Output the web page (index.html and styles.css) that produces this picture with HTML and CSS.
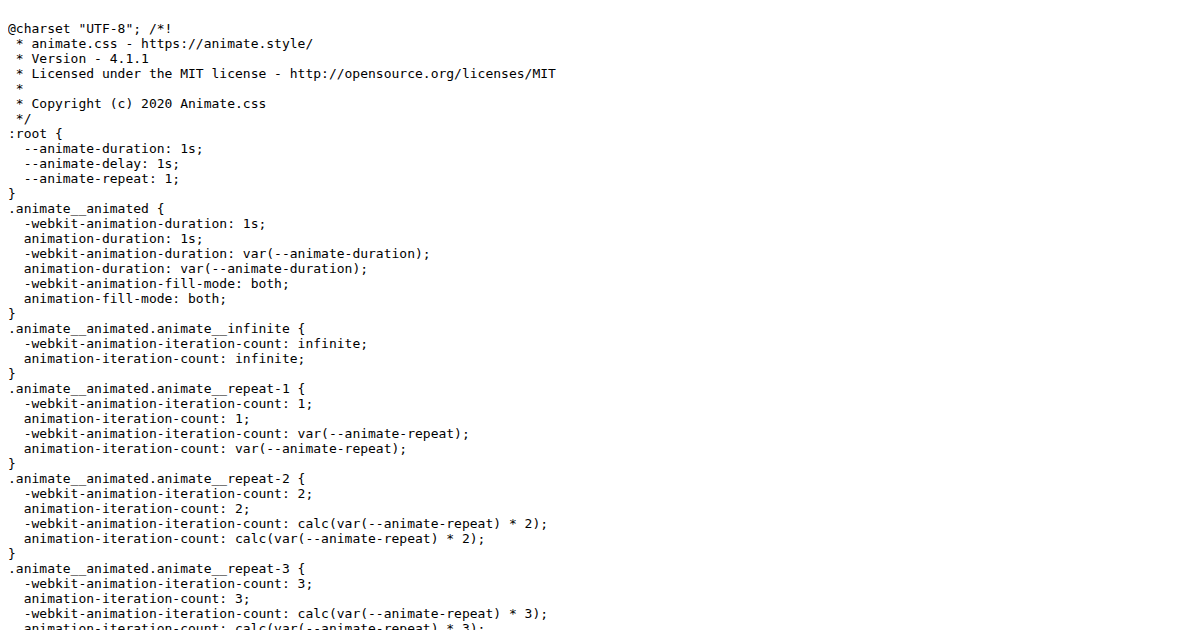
FILE: index.html
```html
<!DOCTYPE html>
<html>
<head>
<meta charset="UTF-8">
<link rel="stylesheet" href="styles.css">
</head>
<body class="page">
<pre class="source">@charset "UTF-8"; /*!
 * animate.css - https://animate.style/
 * Version - 4.1.1
 * Licensed under the MIT license - http://opensource.org/licenses/MIT
 *
 * Copyright (c) 2020 Animate.css
 */
:root {
  --animate-duration: 1s;
  --animate-delay: 1s;
  --animate-repeat: 1;
}
.animate__animated {
  -webkit-animation-duration: 1s;
  animation-duration: 1s;
  -webkit-animation-duration: var(--animate-duration);
  animation-duration: var(--animate-duration);
  -webkit-animation-fill-mode: both;
  animation-fill-mode: both;
}
.animate__animated.animate__infinite {
  -webkit-animation-iteration-count: infinite;
  animation-iteration-count: infinite;
}
.animate__animated.animate__repeat-1 {
  -webkit-animation-iteration-count: 1;
  animation-iteration-count: 1;
  -webkit-animation-iteration-count: var(--animate-repeat);
  animation-iteration-count: var(--animate-repeat);
}
.animate__animated.animate__repeat-2 {
  -webkit-animation-iteration-count: 2;
  animation-iteration-count: 2;
  -webkit-animation-iteration-count: calc(var(--animate-repeat) * 2);
  animation-iteration-count: calc(var(--animate-repeat) * 2);
}
.animate__animated.animate__repeat-3 {
  -webkit-animation-iteration-count: 3;
  animation-iteration-count: 3;
  -webkit-animation-iteration-count: calc(var(--animate-repeat) * 3);
  animation-iteration-count: calc(var(--animate-repeat) * 3);
}
.animate__animated.animate__delay-1s {
  -webkit-animation-delay: 1s;
  animation-delay: 1s;
}
</pre>
</body>
</html>
```

FILE: styles.css
```css
html, body {
  background: #ffffff;
}
.page {
  margin: 8px;
  overflow: hidden;
}
.source {
  margin: 13px 0;
  font-family: "DejaVu Sans Mono", monospace;
  font-size: 13px;
  line-height: 15px;
  color: #000000;
  white-space: pre-wrap;
  word-wrap: break-word;
}
```
